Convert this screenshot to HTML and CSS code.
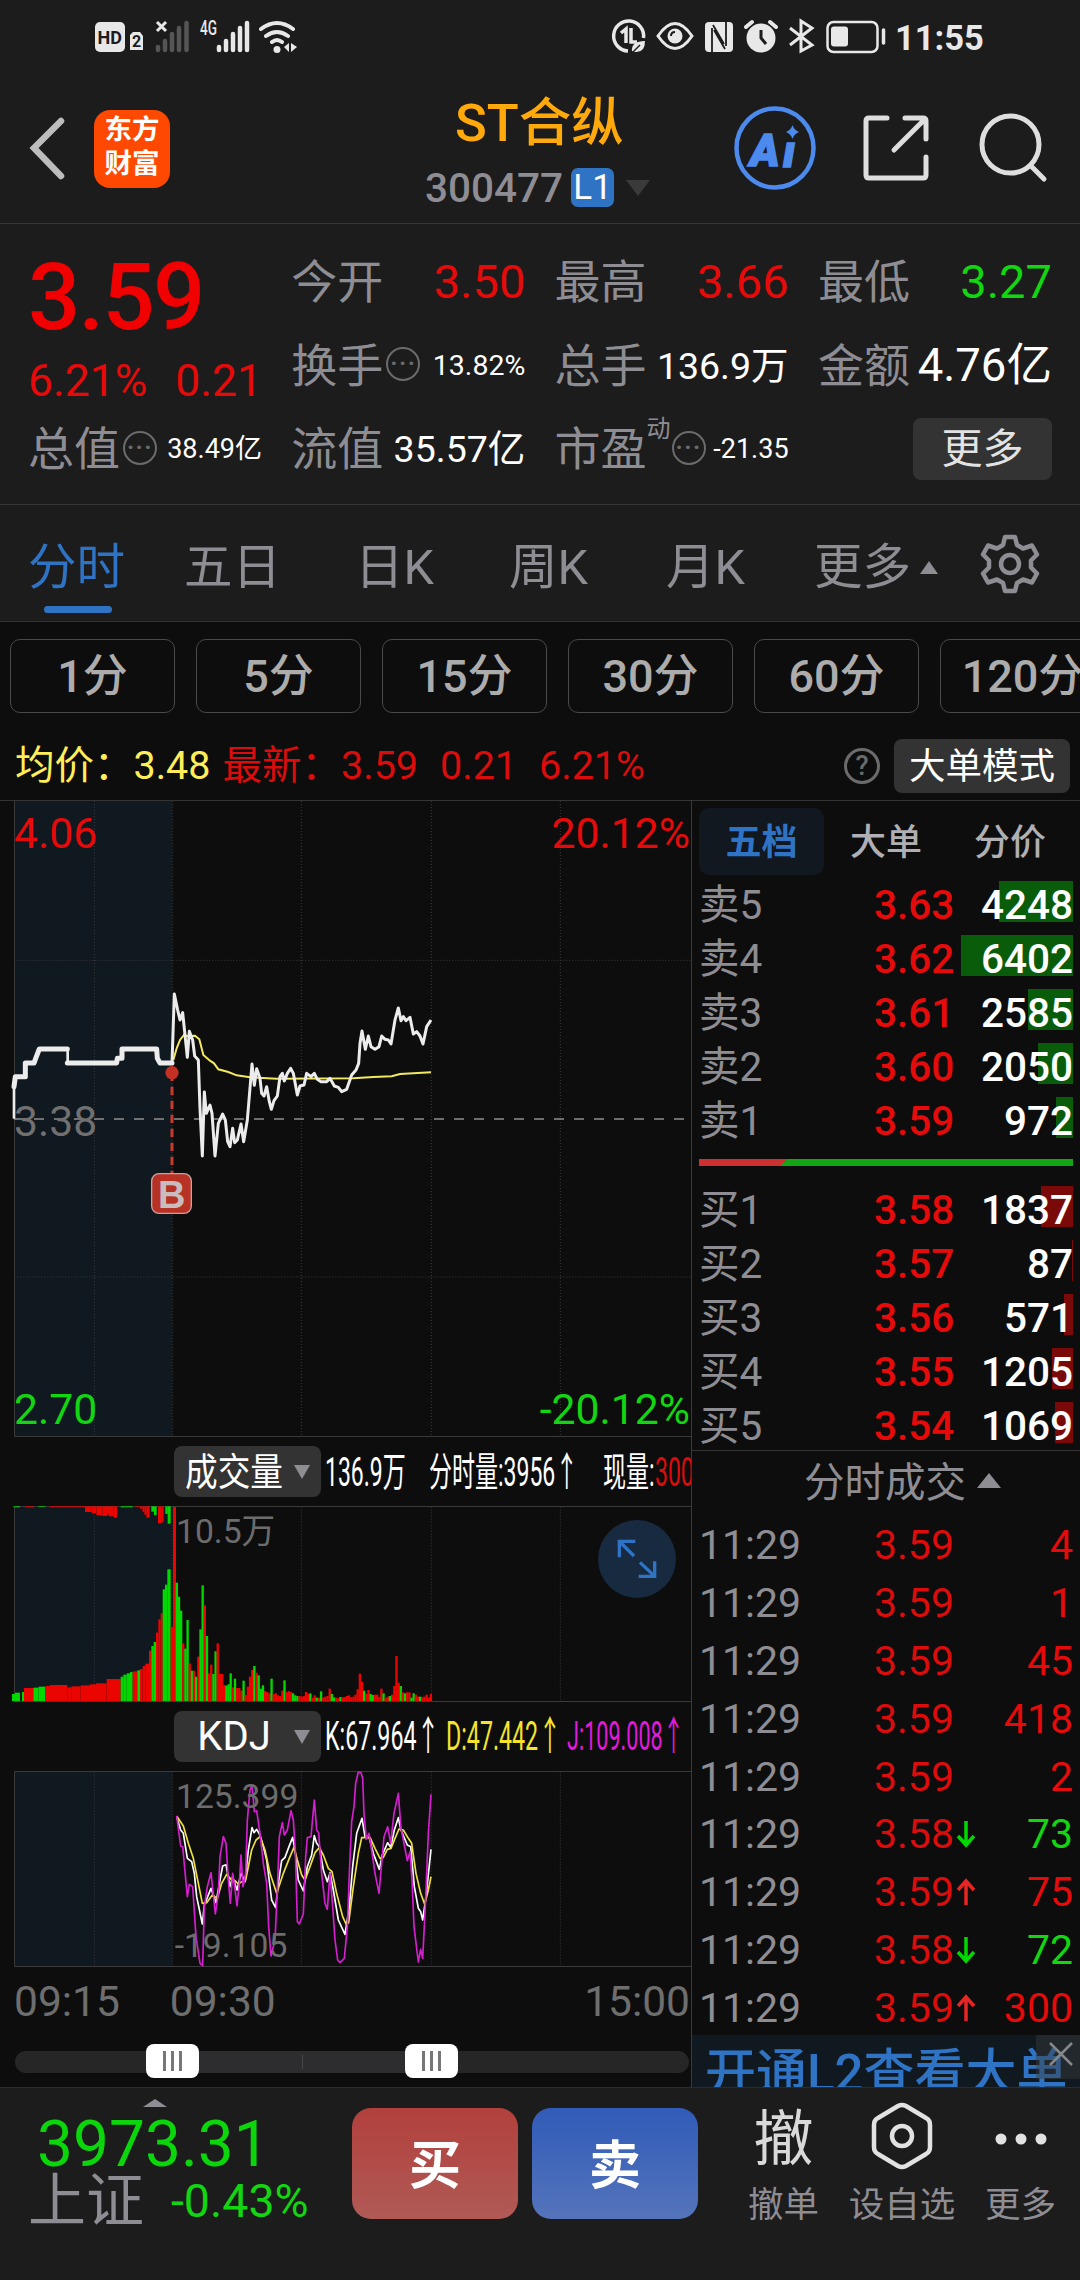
FILE: index.html
```html
<!DOCTYPE html>
<html lang="zh-CN">
<head>
    <meta charset="UTF-8">
    <meta name="viewport" content="width=device-width, initial-scale=1.0">
    <title>ST合纵 300477</title>
    <link rel="stylesheet" href="styles.css">
</head>
<body>
    <!-- Status Bar -->
    <div class="status-bar">
        <svg class="status-left" viewBox="90 16 215 42" width="215" height="42">
            <rect x="95" y="22" width="30" height="30" rx="5" fill="#e8e8e8"/>
            <text x="97.500" y="44" class="hd-text">HD</text>
            <path d="M133 32h7l3 4v14h-13V35z" fill="#e8e8e8"/>
            <text x="132" y="47" class="sim-text">2</text>
            <path d="M157 22l9 9M166 22l-9 9" stroke="#e8e8e8" stroke-width="3"/>
            <path d="M158 47v3M165 41v9M172 34v16M179 28v22M186.500 23v27" stroke="#555" stroke-width="4.500" stroke-linecap="round"/>
            <text x="200" y="35" class="net-text" textLength="17" lengthAdjust="spacingAndGlyphs">4G</text>
            <path d="M219 47v3M226 41v9M233 34v16M240 28v22M247 23v27" stroke="#e8e8e8" stroke-width="4.500" stroke-linecap="round"/>
            <path d="M261 29q16-12 32 0M266 36q11-8 22 0M272 42q5-4 10 0" fill="none" stroke="#e8e8e8" stroke-width="4" stroke-linecap="round"/>
            <circle cx="277" cy="49.500" r="3.500" fill="#e8e8e8"/>
            <path d="M289 43v9l-5-5zM291 43v9l6-5z" fill="#e8e8e8"/>
        </svg>
        <svg class="status-right" viewBox="610 16 278 42" width="278" height="42">
            <path d="M643.500 38A15 15 0 1 0 628 51" fill="none" stroke="#e8e8e8" stroke-width="3.500"/>
            <path d="M621 33l5-4v14M631 28v14h6" fill="none" stroke="#e8e8e8" stroke-width="3.500"/>
            <path d="M632 51q-1-10 13-10q0 12-10 11z" fill="#e8e8e8"/>
            <path d="M633 52l7-7" stroke="#1c1c1c" stroke-width="1.500"/>
            <path d="M658 36q17-25 34 0q-17 25-34 0z" fill="none" stroke="#e8e8e8" stroke-width="3"/>
            <circle cx="675" cy="36" r="7.500" fill="#e8e8e8"/>
            <path d="M671 36q0-4 4-4" stroke="#1c1c1c" stroke-width="2" fill="none"/>
            <rect x="705" y="22" width="28" height="30" rx="4" fill="#e8e8e8"/>
            <path d="M712 28v25M714 30l11 19M726 46V21M724 44L713 25" stroke="#1c1c1c" stroke-width="1.800"/>
            <circle cx="761" cy="38" r="14.500" fill="#e8e8e8"/>
            <path d="M746 27l6-5M776 27l-6-5" stroke="#e8e8e8" stroke-width="4" stroke-linecap="round"/>
            <path d="M761 30v8l5 6" fill="none" stroke="#1c1c1c" stroke-width="3"/>
            <path d="M790 28l22 17l-11 6V21l11 7l-22 17" fill="none" stroke="#e8e8e8" stroke-width="3"/>
            <rect x="827.500" y="22" width="50" height="30" rx="6" fill="none" stroke="#e8e8e8" stroke-width="2.500"/>
            <rect x="831" y="26.500" width="17" height="20" rx="3" fill="#e8e8e8"/>
            <path d="M883.500 30v13" stroke="#e8e8e8" stroke-width="3.500" stroke-linecap="round"/>
        </svg>
        <span class="clock">11:55</span>
    </div>

    <!-- Header -->
    <div class="header">
        <svg class="back-icon" viewBox="0 0 40 64" width="40" height="64">
            <path d="M34 5L7 32l27 28" fill="none" stroke="#bdbdbd" stroke-width="6.500" stroke-linecap="round"/>
        </svg>
        <div class="app-logo">东方<br>财富</div>
        <div class="stock">
            <div class="stock-name">ST合纵</div>
            <div class="stock-code">
                <span>300477</span><span class="level">L1</span><i class="tri-down"></i>
            </div>
        </div>
        <svg class="header-icons" viewBox="730 100 330 96" width="330" height="96">
            <ellipse cx="775" cy="148" rx="38.500" ry="39.500" fill="none" stroke="#4c8aee" stroke-width="4.500"/>
            <text x="750" y="166" class="ai-text">A</text>
            <text x="783" y="167" class="ai-text ai-i">ı</text>
            <path d="M792.500 125q1.500 5 6.500 7q-5 2-6.500 7q-1.500-5-6.500-7q5-2 6.500-7z" fill="#4c8aee"/>
            <path d="M887 118h-18q-3 0-3 3v54q0 3 3 3h54q3 0 3-3v-18M905 118h18q3 0 3 3v18M924 120l-30 30" fill="none" stroke="#dedede" stroke-width="5" stroke-linecap="round"/>
            <circle cx="1010.500" cy="144.500" r="28.500" fill="none" stroke="#dedede" stroke-width="5"/>
            <path d="M1031 166l13 13" stroke="#dedede" stroke-width="5" stroke-linecap="round"/>
        </svg>
    </div>

    <!-- Quote -->
    <div class="quote">
        <div class="price-box">
            <div class="price">3.59</div>
            <div class="change"><span>6.21%</span><span>0.21</span></div>
        </div>
        <div class="cell"><span class="label">今开</span><span class="value red v47">3.50</span></div>
        <div class="cell"><span class="label">最高</span><span class="value red v47">3.66</span></div>
        <div class="cell"><span class="label">最低</span><span class="value green v47">3.27</span></div>
        <div class="cell"><span class="label">换手</span><i class="dots">···</i><span class="value v28">13.82%</span></div>
        <div class="cell"><span class="label">总手</span><span class="value v37">136.9万</span></div>
        <div class="cell"><span class="label">金额</span><span class="value v45">4.76亿</span></div>
        <div class="cell"><span class="label">总值</span><i class="dots">···</i><span class="value v27">38.49亿</span></div>
        <div class="cell"><span class="label">流值</span><span class="value v37">35.57亿</span></div>
        <div class="cell"><span class="label">市盈</span><span class="sup">动</span><i class="dots">···</i><span class="value v27">-21.35</span></div>
        <div class="cell"><span class="more-btn">更多</span></div>
    </div>

    <!-- Tabs -->
    <div class="tabs">
        <span class="tab active">分时</span>
        <span class="tab">五日</span>
        <span class="tab">日K</span>
        <span class="tab">周K</span>
        <span class="tab">月K</span>
        <span class="tab">更多<i class="tri-up"></i></span>
        <svg class="gear" viewBox="0 0 60 60" width="60" height="60">
            <path d="M25 3h10l2 8 6 3.500 9-3 5 9-6 6v7l6 6-5 9-9-3-6 3.500-2 8H25l-2-8-6-3.500-9 3-5-9 6-6v-7l-6-6 5-9 9 3 6-3.500z" fill="none" stroke="#8e8d93" stroke-width="4.500" stroke-linejoin="round"/>
            <circle cx="30" cy="30" r="9" fill="none" stroke="#8e8d93" stroke-width="4.500"/>
        </svg>
    </div>

    <div class="periods">
        <span>1分</span><span>5分</span><span>15分</span><span>30分</span><span>60分</span><span>120分</span>
    </div>

    <div class="info">
        <span class="avg">均价：3.48</span>
        <span class="last">最新：3.59</span>
        <span class="last">0.21</span>
        <span class="last">6.21%</span>
        <i class="help">?</i>
        <span class="mode-btn">大单模式</span>
    </div>

    <div class="main">
        <!-- Charts Section -->
        <div class="charts">
            <svg class="price-chart" viewBox="0 63 2073 1908" width="691" height="636">
                <rect x="43" y="63" width="474" height="1905" fill="#101820"/>
                <path class="grid-line" d="M283 63v1905M517 63v1905M904 63v1905M1294 63v1905M1681 63v1905M43 541h2030M43 1491h2030"/>
                <path class="axis" d="M43.500 63v1906.500h2030"/>
                <path d="M42 1017h2031" stroke="#8f8f8f" stroke-width="5" stroke-dasharray="30 30"/>
                <text x="42" y="205" class="axis-text red-fill">4.06</text>
                <text x="2070" y="205" class="axis-text red-fill end">20.12%</text>
                <text x="42" y="1068" class="axis-text">3.38</text>
                <text x="42" y="1932" class="axis-text green-fill">2.70</text>
                <text x="2070" y="1932" class="axis-text green-fill end">-20.12%</text>
                <polyline fill="none" stroke="#f2e95f" stroke-width="6" points="520,840 530,805 540,780 552,765 560,768 585,767 598,778 610,825 630,842 642,850 655,868 685,876 710,886 750,892 830,896 1060,895 1120,891 1175,889 1200,882 1240,880 1293,877"/>
                <path d="M42 1016V920" stroke="#ececec" stroke-width="8"/>
                <polyline fill="none" stroke="#ececec" stroke-width="15" stroke-linejoin="round" stroke-linecap="round" points="42,920 46,890 76,890 76,849 102,849 108,833 118,807 202,807"/>
                <path d="M203 807v42" stroke="#ececec" stroke-width="8"/>
                <polyline fill="none" stroke="#ececec" stroke-width="15" stroke-linejoin="round" stroke-linecap="round" points="202,849 350,849 352,835 366,835 366,807 470,807 472,835 480,849 516,849"/>
                <polyline fill="none" stroke="#ececec" stroke-width="9" stroke-linejoin="round" points="516,849 523,642 533,690 540,720 548,698 562,832 568,754 578,780 584,828 595,840 600,985 607,1128 613,936 619,1000 630,975 636,1000 645,1128 655,1030 668,1002 676,1020 683,1085 690,1100 698,1045 704,1088 712,1080 723,1032 731,1085 742,1020 756,852 763,916 770,866 780,895 785,940 792,948 800,920 808,965 814,988 822,962 832,948 840,890 847,880 853,903 862,880 872,865 880,880 892,945 900,918 912,915 920,880 933,890 943,880 952,898 963,905 980,905 990,895 1003,918 1015,922 1025,935 1040,928 1055,885 1068,870 1076,850 1080,790 1086,753 1096,808 1105,768 1113,800 1125,808 1137,800 1145,768 1155,778 1165,780 1173,792 1185,720 1195,684 1203,722 1210,710 1218,722 1230,712 1240,762 1250,755 1260,768 1269,792 1280,740 1293,720"/>
                <!-- Buy marker -->
                <path d="M516 878v302" stroke="#c83a2e" stroke-width="9" stroke-dasharray="25 17"/>
                <circle cx="516" cy="878" r="20" fill="#c23124"/>
                <rect x="455" y="1181" width="119" height="119" rx="22" fill="#b83125" stroke="#c9a09d" stroke-width="4"/>
                <text x="515" y="1283" class="marker-text">B</text>
            </svg>

            <div class="indicator">
                <span class="select"><span class="select-volume">成交量</span><i class="tri-select"></i></span>
                <div class="readout">
                    <span class="r1">136.9万</span>
                    <span class="r2">分时量:3956↑</span>
                    <span class="r3">现量:</span>
                    <span class="r4">300</span>
                </div>
            </div>

            <svg class="sub-chart" viewBox="0 258 2073 588" width="691" height="196">
                <rect x="43" y="260" width="474" height="584" fill="#101820"/>
                <path class="grid-line" d="M283 260v584M517 260v584M904 260v584M1294 260v584M1681 260v584"/>
                <path class="axis" d="M2073 259.500H43.500v585H2073"/>
                <g id="volume"></g>
                <text x="528" y="370" class="scale-text">10.5万</text>
                <circle cx="1911" cy="417" r="117" fill="#182a40"/>
                <path d="M1858 412v-48h48M1860 366l42 42M1964 424v45h-48M1962 467l-42-40" fill="none" stroke="#2f74c4" stroke-width="10"/>
            </svg>

            <div class="indicator second">
                <span class="select"><span class="select-kdj">KDJ</span><i class="tri-select"></i></span>
                <div class="readout">
                    <span class="k">K:67.964↑</span>
                    <span class="d">D:47.442↑</span>
                    <span class="j">J:109.008↑</span>
                </div>
            </div>

            <svg class="sub-chart" viewBox="0 93 2073 588" width="691" height="196">
                <rect x="43" y="95" width="474" height="584" fill="#101820"/>
                <path class="grid-line" d="M283 95v584M517 95v584M904 95v584M1294 95v584M1681 95v584"/>
                <path class="axis" d="M2073 94.500H43.500v585H2073"/>
                <polyline class="kdj" stroke="#fff" points="530,230 542,270 550,280 562,355 575,365 583,400 590,470 607,552 613,495 633,445 648,488 660,420 668,378 678,374 690,440 698,410 711,450 723,400 735,425 745,330 756,263 762,278 770,268 780,285 790,320 800,360 815,480 827,503 835,430 845,362 855,352 867,320 878,292 885,330 895,420 910,453 922,380 935,345 943,287 950,310 958,320 970,390 982,425 990,398 1000,450 1015,540 1035,583 1048,500 1058,380 1070,280 1086,235 1095,290 1107,290 1120,340 1138,388 1147,345 1163,308 1172,322 1183,270 1195,233 1203,270 1222,315 1232,320 1243,440 1255,505 1262,515 1268,540 1278,470 1293,328"/>
                <polyline class="kdj" stroke="#efe23c" points="530,228 550,258 565,310 580,355 595,430 607,490 620,488 637,465 652,475 665,430 680,403 693,418 705,422 715,432 725,425 737,420 755,330 768,300 780,290 795,330 810,400 830,460 850,400 870,350 882,322 892,360 905,405 915,420 930,380 945,338 958,323 970,345 985,385 996,395 1010,460 1028,530 1038,552 1046,548 1060,440 1075,340 1085,293 1110,292 1125,325 1140,355 1150,352 1162,328 1173,325 1185,295 1197,267 1210,270 1225,295 1235,310 1248,400 1262,460 1274,493 1285,450 1293,410"/>
                <polyline class="kdj" stroke="#d41fd0" points="530,228 542,318 548,320 562,470 568,433 578,440 588,590 600,670 608,677 613,500 622,440 633,398 646,522 655,460 660,350 670,290 678,310 685,420 691,490 698,400 704,440 711,498 718,430 723,345 729,440 737,400 742,240 750,150 756,135 763,215 770,212 780,280 790,370 800,430 806,560 813,648 825,600 832,450 838,290 847,248 853,285 862,270 873,212 880,240 886,330 892,545 898,552 910,522 917,350 922,293 933,290 943,180 950,270 956,278 965,400 975,490 982,508 990,400 998,500 1005,600 1013,660 1020,668 1033,655 1042,560 1048,400 1055,245 1062,200 1067,130 1075,96 1083,98 1088,115 1092,220 1099,298 1107,280 1115,330 1125,400 1137,460 1145,370 1152,290 1163,260 1172,310 1182,220 1195,160 1203,265 1210,300 1222,362 1230,335 1236,420 1242,560 1255,666 1262,628 1268,655 1276,500 1285,280 1293,163"/>
                <text x="528" y="204" class="scale-text">125.399</text>
                <text x="524" y="652" class="scale-text">-19.105</text>
            </svg>

            <div class="times"><span>09:15</span><span>09:30</span><span>15:00</span></div>

            <div class="slider">
                <div class="track"></div>
                <i class="handle"></i>
                <div class="track range"></div>
                <i class="handle"></i>
                <div class="track rest"></div>
            </div>
        </div>

        <!-- Order Book Section -->
        <div class="side">
            <div class="side-tabs"><span class="on">五档</span><span>大单</span><span>分价</span></div>
            <div class="book sell">
                <div class="level-row"><span>卖5</span><b>3.63</b><em><i style="width: 74px"></i>4248</em></div>
                <div class="level-row"><span>卖4</span><b>3.62</b><em><i style="width: 112px"></i>6402</em></div>
                <div class="level-row"><span>卖3</span><b>3.61</b><em><i style="width: 45px"></i>2585</em></div>
                <div class="level-row"><span>卖2</span><b>3.60</b><em><i style="width: 35px"></i>2050</em></div>
                <div class="level-row"><span>卖1</span><b>3.59</b><em><i style="width: 17px"></i>972</em></div>
            </div>
            <div class="ratio"></div>
            <div class="book buy">
                <div class="level-row"><span>买1</span><b>3.58</b><em><i style="width: 32px"></i>1837</em></div>
                <div class="level-row"><span>买2</span><b>3.57</b><em><i style="width: 1px"></i>87</em></div>
                <div class="level-row"><span>买3</span><b>3.56</b><em><i style="width: 9px"></i>571</em></div>
                <div class="level-row"><span>买4</span><b>3.55</b><em><i style="width: 21px"></i>1205</em></div>
                <div class="level-row"><span>买5</span><b>3.54</b><em><i style="width: 18px"></i>1069</em></div>
            </div>
            <div class="deals-title">分时成交<i class="tri-up big"></i></div>
            <div class="deals">
                <div class="deal"><span>11:29</span><b>3.59</b><em>4</em></div>
                <div class="deal"><span>11:29</span><b>3.59</b><em>1</em></div>
                <div class="deal"><span>11:29</span><b>3.59</b><em>45</em></div>
                <div class="deal"><span>11:29</span><b>3.59</b><em>418</em></div>
                <div class="deal"><span>11:29</span><b>3.59</b><em>2</em></div>
                <div class="deal down"><span>11:29</span><b>3.58</b><svg width="20" height="28" viewBox="0 0 20 28"><path d="M10 1v24M2 16l8 9 8-9"/></svg><em>73</em></div>
                <div class="deal up"><span>11:29</span><b>3.59</b><svg width="20" height="28" viewBox="0 0 20 28"><path d="M10 27V3M2 12l8-9 8 9"/></svg><em>75</em></div>
                <div class="deal down"><span>11:29</span><b>3.58</b><svg width="20" height="28" viewBox="0 0 20 28"><path d="M10 1v24M2 16l8 9 8-9"/></svg><em>72</em></div>
                <div class="deal up"><span>11:29</span><b>3.59</b><svg width="20" height="28" viewBox="0 0 20 28"><path d="M10 27V3M2 12l8-9 8 9"/></svg><em>300</em></div>
            </div>
            <div class="l2-banner">
                开通L2查看大单
                <span class="close"><svg width="26" height="26" viewBox="0 0 26 26"><path d="M2 2l22 22M24 2L2 24" stroke="#85888b" stroke-width="2.500"/></svg></span>
            </div>
        </div>
    </div>

    <!-- Bottom Bar -->
    <div class="bottom-bar">
        <div class="index">
            <i class="tri-up index-tri"></i>
            <div class="index-value">3973.31</div>
            <div class="index-row"><span class="index-name">上证</span><span class="index-change">-0.43%</span></div>
        </div>
        <div class="trade buy-btn">买</div>
        <div class="trade sell-btn">卖</div>
        <div class="action a1"><span class="big-char">撤</span><span>撤单</span></div>
        <div class="action a2">
            <svg width="64" height="70" viewBox="870 2101 64 70">
                <path d="M898 2106q4-2 8 0l20 12q4 2 4 7v22q0 5-4 7l-20 12q-4 2-8 0l-20-12q-4-2-4-7v-22q0-5 4-7z" fill="none" stroke="#e2e2e2" stroke-width="4.500"/>
                <circle cx="902" cy="2136" r="10" fill="none" stroke="#e2e2e2" stroke-width="4.500"/>
            </svg>
            <span>设自选</span>
        </div>
        <div class="action a3">
            <svg width="64" height="70" viewBox="989 2101 64 70" fill="#e2e2e2">
                <circle cx="1001" cy="2139" r="5.500"/><circle cx="1021" cy="2139" r="5.500"/><circle cx="1041" cy="2139" r="5.500"/>
            </svg>
            <span>更多</span>
        </div>
    </div>
    <script src="chart.js"></script>
</body>
</html>
```
FILE: chart.js
```js
const RED = '#ea0500';
const GREEN = '#00d800';
const TOP = 259;
const BASE = 843;
const group = document.getElementById('volume');

function addBar(x, y, width, height, color) {
    const bar = document.createElementNS('http://www.w3.org/2000/svg', 'rect');
    bar.setAttribute('x', x);
    bar.setAttribute('y', y);
    bar.setAttribute('width', width);
    bar.setAttribute('height', height);
    bar.setAttribute('fill', color);
    group.appendChild(bar);
}

// Call auction, drawn from the bottom: x, top, width, side
const auction = [
    [36, 822, 9, 'g'], [45, 818, 15, 'g'], [66, 816, 6, 'g'], [72, 804, 28, 'r'], [100, 803, 16, 'g'], [116, 800, 20, 'g'],
    [136, 798, 14, 'r'], [150, 795, 52, 'r'], [202, 802, 12, 'r'], [214, 799, 28, 'r'], [242, 796, 28, 'r'],
    [270, 793, 18, 'r'], [288, 790, 32, 'r'], [320, 777, 42, 'r'], [362, 770, 8, 'g'], [370, 764, 10, 'g'],
    [380, 760, 10, 'g'], [390, 756, 8, 'g'], [398, 754, 14, 'r'], [412, 751, 8, 'g'], [420, 747, 8, 'r'],
    [428, 738, 8, 'r'], [436, 731, 11, 'r'], [447, 692, 7, 'r'], [454, 678, 7, 'g'], [461, 666, 7, 'g'],
    [468, 638, 7, 'r'], [475, 598, 7, 'r'], [482, 580, 6, 'r'], [488, 508, 7, 'g'], [495, 494, 7, 'g'],
    [502, 448, 10, 'g'], [512, 620, 8, 'r'], [519, 261, 9, 'r']
];

// Unmatched orders, hanging from the top: x, bottom, width, side
const unmatched = [
    [40, 262, 20, 'g'], [75, 262, 27, 'r'], [115, 261, 20, 'g'], [150, 262, 105, 'r'], [255, 276, 20, 'r'],
    [275, 280, 14, 'r'], [289, 286, 18, 'r'], [307, 288, 14, 'r'], [321, 284, 6, 'r'], [327, 289, 14, 'r'],
    [341, 293, 10, 'r'], [362, 262, 36, 'g'], [405, 261, 15, 'r'], [420, 266, 7, 'r'], [427, 275, 6, 'r'],
    [433, 284, 6, 'r'], [439, 293, 10, 'r'], [454, 275, 8, 'g'], [462, 285, 8, 'g'], [474, 310, 10, 'r'],
    [484, 307, 7, 'r'], [496, 282, 7, 'g'], [503, 311, 9, 'g']
];

// One bar per minute from 09:31: top, side
const minutes = [
    [488, 'g'], [530, 'g'], [572, 'g'], [670, 'r'], [686, 'g'], [600, 'g'], [730, 'r'], [752, 'g'], [752, 'r'], [770, 'g'],
    [710, 'r'], [628, 'g'], [496, 'g'], [556, 'r'], [648, 'g'], [760, 'r'], [734, 'r'], [762, 'g'], [694, 'g'], [670, 'r'],
    [762, 'r'], [762, 'r'], [795, 'r'], [797, 'g'], [793, 'g'], [760, 'g'], [802, 'r'], [776, 'g'], [804, 'r'], [804, 'r'],
    [812, 'r'], [782, 'g'], [825, 'r'], [800, 'r'], [770, 'r'], [750, 'r'], [738, 'g'], [758, 'r'], [766, 'g'], [806, 'g'],
    [796, 'g'], [813, 'r'], [816, 'r'], [820, 'r'], [776, 'g'], [822, 'r'], [820, 'r'], [826, 'r'], [828, 'r'], [812, 'r'],
    [781, 'g'], [816, 'r'], [813, 'r'], [816, 'r'], [820, 'g'], [826, 'g'], [828, 'g'], [828, 'r'], [830, 'r'], [828, 'r'],
    [816, 'r'], [822, 'r'], [820, 'g'], [833, 'r'], [826, 'r'], [833, 'g'], [833, 'r'], [814, 'g'], [832, 'r'], [830, 'r'],
    [828, 'r'], [806, 'r'], [822, 'g'], [832, 'g'], [833, 'r'], [835, 'r'], [831, 'g'], [832, 'r'], [831, 'r'], [828, 'r'],
    [826, 'r'], [832, 'r'], [830, 'r'], [824, 'r'], [808, 'r'], [761, 'r'], [786, 'r'], [812, 'g'], [822, 'r'], [810, 'r'],
    [822, 'g'], [825, 'g'], [824, 'r'], [824, 'r'], [831, 'r'], [806, 'r'], [820, 'g'], [833, 'r'], [830, 'r'], [828, 'g'],
    [824, 'r'], [798, 'r'], [708, 'r'], [788, 'r'], [798, 'g'], [817, 'r'], [820, 'g'], [817, 'r'], [817, 'r'], [833, 'g'],
    [820, 'g'], [824, 'r'], [830, 'r'], [830, 'g'], [831, 'r'], [830, 'r'], [824, 'r'], [832, 'r'], [822, 'r']
];

auction.forEach(([x, y, w, side]) => addBar(x, y, w, BASE - y, side === 'r' ? RED : GREEN));
unmatched.forEach(([x, y, w, side]) => addBar(x, TOP, w, y - TOP, side === 'r' ? RED : GREEN));
minutes.forEach(([y, side], i) => addBar(527 + i * 6.46, y, 7, BASE - y, side === 'r' ? RED : GREEN));
```
FILE: styles.css
```css
* {
    box-sizing: border-box;
}

body {
    margin: 0;
    width: 1080px;
    height: 2280px;
    overflow: hidden;
    background-color: #0d0d0d;
    color: #8e8d93;
    font-family: Roboto, "Noto Sans CJK SC", sans-serif;
    display: flex;
    flex-direction: column;
}

i, em, b {
    font-style: normal;
    font-weight: normal;
}

svg {
    display: block;
    flex: none;
}

.red { color: #e60a0a; }
.green { color: #12d612; }

/* Status bar */
.status-bar {
    display: flex;
    height: 74px;
    padding: 16px 0 0 90px;
    background-color: #1c1c1c;
}

.status-right {
    margin-left: 305px;
}

.hd-text { font-size: 18px; font-weight: 700; fill: #1c1c1c; }
.sim-text { font-size: 16px; font-weight: 700; fill: #1c1c1c; }
.net-text { font-size: 20px; font-weight: 500; fill: #e8e8e8; }

.clock {
    margin-left: 7px;
    color: #e8e8e8;
    font-size: 34.500px;
    font-weight: 700;
    line-height: 44px;
}

/* Header */
.header {
    display: flex;
    height: 150px;
    background-color: #1c1c1c;
    border-bottom: 1px solid #343434;
}

.back-icon {
    margin: 42px 0 0 27px;
}

.app-logo {
    width: 76px;
    height: 78px;
    margin: 36px 0 0 27px;
    padding-top: 3px;
    border-radius: 16px;
    background-color: #ff4800;
    color: #fff;
    font-size: 27.500px;
    font-weight: 700;
    line-height: 34px;
    text-align: center;
}

.stock {
    width: 560px;
    padding-top: 18px;
}

.stock-name {
    padding-left: 285px;
    color: #ffa90a;
    font-size: 52.500px;
    font-weight: 500;
    line-height: 63px;
}

.stock-code {
    display: flex;
    align-items: center;
    height: 68px;
    padding: 0 0 2px 255px;
    font-size: 40.500px;
    font-weight: 500;
}

.level {
    width: 43px;
    height: 39px;
    margin-left: 8px;
    border-radius: 7px;
    background-color: #2f74c4;
    color: #fff;
    font-size: 35px;
    font-weight: 400;
    line-height: 39px;
    text-align: center;
}

.tri-down {
    margin-left: 12px;
    border: 12px solid transparent;
    border-top: 16px solid #3a3a3a;
    border-bottom: 0;
}

.header-icons {
    margin-top: 26px;
}

.ai-text {
    font-size: 45px;
    font-weight: 900;
    font-style: italic;
    fill: #4c8aee;
    stroke: #4c8aee;
    stroke-width: 1.500px;
}

.ai-i {
    font-size: 44px;
}

/* Quote */
.quote {
    display: grid;
    grid-template-columns: repeat(4, 234px);
    grid-template-rows: 84px 84px 83px;
    column-gap: 29.300px;
    height: 281px;
    padding: 16px 0 0 28px;
    background-color: #1c1c1c;
    border-bottom: 1px solid #343434;
}

.price-box {
    grid-row: 1 / 3;
}

.price {
    height: 112px;
    color: #f00000;
    font-size: 92px;
    font-weight: 500;
    letter-spacing: -1.700px;
    line-height: 115px;
}

.change {
    display: flex;
    justify-content: space-between;
    width: 234px;
    color: #e60a0a;
    font-size: 44.500px;
    line-height: 58px;
}

.cell {
    position: relative;
    display: flex;
    align-items: center;
}

.label {
    font-size: 46px;
    line-height: 60px;
}

.value {
    margin-left: auto;
    color: #fff;
    line-height: 56px;
}

.value.red { color: #e60a0a; }
.value.green { color: #12d612; }

.v47 { font-size: 47px; }
.v45 { font-size: 45.500px; }
.v37 { font-size: 37.500px; }
.v28 { font-size: 28.500px; }
.v27 { font-size: 27px; }

.dots {
    width: 34px;
    height: 34px;
    margin: -3px 0 0 3px;
    border: 2.500px solid #6b6b6b;
    border-radius: 50%;
    color: #6b6b6b;
    font-size: 24px;
    font-weight: 700;
    letter-spacing: 1.500px;
    line-height: 29px;
    text-align: center;
}

.sup {
    margin-top: -40px;
    font-size: 24px;
    line-height: 24px;
}

.sup + .dots {
    margin-left: 1px;
}

.more-btn {
    width: 139px;
    height: 62px;
    margin-left: auto;
    border-radius: 8px;
    background-color: #333;
    color: #e3e3e3;
    font-size: 41px;
    line-height: 62px;
    text-align: center;
}

/* Tabs */
.tabs {
    display: grid;
    grid-template-columns: 156px 171px 154px 157px 148px 166px 60px;
    align-items: start;
    height: 118px;
    padding: 29px 0 0 28px;
    background-color: #1c1c1c;
    border-bottom: 1px solid #343434;
    font-size: 48.500px;
    line-height: 68px;
}

.tab {
    display: flex;
    align-items: center;
}

.tab.active {
    position: relative;
    color: #2f74c4;
}

.tab.active::after {
    content: "";
    position: absolute;
    left: 16px;
    top: 72px;
    width: 68px;
    height: 7px;
    border-radius: 4px;
    background-color: #2f74c4;
}

.tri-up {
    margin-left: 9px;
    border: 9px solid transparent;
    border-bottom: 13px solid #8e8d93;
    border-top: 0;
}

.periods {
    display: flex;
    gap: 21px;
    height: 109px;
    padding: 17px 0 0 10px;
}

.periods span {
    flex: none;
    width: 165px;
    height: 74px;
    border: 1.500px solid #4a4a4a;
    border-radius: 10px;
    color: #adacac;
    font-size: 45px;
    font-weight: 500;
    line-height: 73px;
    text-align: center;
}

.info {
    display: flex;
    align-items: center;
    height: 69px;
    padding: 0 10px 0 15px;
    font-size: 39.500px;
    line-height: 50px;
}

.avg { color: #ffee58; }
.last { margin-left: 22px; color: #dc0c0c; }
.avg + .last { margin-left: 12px; }

.help {
    width: 36px;
    height: 36px;
    margin-left: auto;
    border: 3px solid #6b6b6b;
    border-radius: 50%;
    color: #6b6b6b;
    font-size: 27px;
    font-weight: 500;
    line-height: 31px;
    text-align: center;
}

.mode-btn {
    width: 176px;
    height: 54px;
    margin-left: 14px;
    border-radius: 8px;
    background-color: #333;
    color: #fff;
    font-size: 36.500px;
    line-height: 55px;
    text-align: center;
}

/* Charts */
.main {
    display: flex;
    height: 1287px;
    border-top: 1px solid #343434;
}

.charts {
    width: 692px;
    border-right: 1px solid #3a3a3a;
}

.grid-line {
    stroke: #3c3c3c;
    stroke-width: 3;
    stroke-dasharray: 3 6;
}

.axis {
    fill: none;
    stroke: #3a3a3a;
    stroke-width: 3;
}

.axis-text {
    font-size: 128px;
    fill: #707070;
}

.red-fill { fill: #e60a0a; }
.green-fill { fill: #12d612; }
.end { text-anchor: end; }

.scale-text {
    font-size: 101px;
    fill: #6c6c6c;
}

.marker-text {
    font-family: "Liberation Sans", sans-serif;
    font-size: 114px;
    font-weight: 700;
    fill: #c9bcbc;
    text-anchor: middle;
}

.kdj {
    fill: none;
    stroke-width: 5;
    stroke-linejoin: round;
}

.indicator {
    display: flex;
    height: 69px;
    padding: 9px 0 0 174px;
}

.select {
    display: flex;
    flex: none;
    align-items: center;
    width: 147px;
    height: 51px;
    padding-left: 11px;
    border-radius: 8px;
    background-color: #333;
    color: #fff;
}

.select-volume {
    width: 99px;
    font-size: 38px;
    line-height: 50px;
    white-space: nowrap;
    transform: scaleX(0.86);
    transform-origin: left;
}

.select-kdj {
    width: 99px;
    padding-right: 1px;
    font-size: 40px;
    line-height: 50px;
    text-align: center;
}

.tri-select {
    margin-left: 10px;
    border: 8.500px solid transparent;
    border-top: 14px solid #8e8d93;
    border-bottom: 0;
}

/* Narrow figures beside the indicator name */
.readout {
    display: flex;
    width: 370px;
    padding-left: 4px;
    overflow: hidden;
    color: #fff;
    font-size: 40px;
    line-height: 53px;
}

.readout span {
    flex: none;
    white-space: nowrap;
    transform: scaleX(0.575);
    transform-origin: left;
}

.readout .r1 { width: 104px; }
.readout .r2 { width: 174px; }
.readout .r3 { width: 52px; }
.readout .r4 { color: #dc0c0c; }

.readout .k { width: 121px; transform: scaleX(0.58); }
.readout .d { width: 121px; color: #f5e42b; transform: scaleX(0.58); }
.readout .j { color: #e21ade; transform: scaleX(0.54); }

.second .readout { line-height: 51px; }

.times {
    display: flex;
    height: 70px;
    padding: 0 1px 0 14px;
    color: #6e6e6e;
    font-size: 42.500px;
    line-height: 70px;
}

.times span + span { margin-left: 50px; }
.times span:last-child { margin-left: auto; }

.slider {
    display: flex;
    align-items: center;
    height: 49px;
    padding: 0 2px 0 15px;
}

.track {
    width: 131px;
    height: 22px;
    border-radius: 11px 0 0 11px;
    background-color: #262626;
}

.range {
    width: 206px;
    border-radius: 0;
    background: linear-gradient(#47474a, #47474a) center / 1px 14px no-repeat #2d2d2f;
}

.rest {
    flex: 1;
    border-radius: 0 11px 11px 0;
}

.handle {
    width: 53px;
    height: 34px;
    margin-top: -1px;
    border-radius: 8px;
    background:
        linear-gradient(90deg, #777 3px, transparent 3px 8px, #777 8px 11px, transparent 11px 16px, #777 16px 19px) center / 19px 20px no-repeat #fff;
}

/* Order book */
.side {
    flex: 1;
    display: flex;
    flex-direction: column;
    overflow: hidden;
}

.side-tabs {
    display: flex;
    flex: none;
    height: 80px;
    padding: 7px 0 0 7px;
    color: #b0afb3;
    font-size: 36px;
    font-weight: 500;
    line-height: 71px;
}

.side-tabs span {
    width: 124px;
    height: 67px;
    text-align: center;
}

.side-tabs .on {
    width: 125px;
    border-radius: 10px;
    background-color: #111820;
    color: #2f74c4;
    font-weight: 700;
}

.book {
    flex: none;
    padding: 0 7px 0 7px;
}

.sell { height: 278px; }
.buy { height: 264px; }

.level-row {
    position: relative;
    display: flex;
    height: 54px;
    font-size: 40.500px;
    font-weight: 500;
    line-height: 49px;
}

.level-row span {
    width: 175px;
    font-weight: 400;
}

.level-row b {
    color: #e60a0a;
    font-weight: 500;
}

.level-row em {
    margin-left: auto;
    color: #fff;
    font-weight: 500;
}

.level-row i {
    position: absolute;
    right: 0;
    top: 0;
    z-index: -1;
    height: 41px;
    background-color: #095c09;
}

.buy .level-row i {
    background-color: #7a0a0a;
}

.ratio {
    flex: none;
    height: 7px;
    margin: 0 7px 20px;
    background: linear-gradient(135deg, #cc3030 62px, #14a514 63px);
}

.deals-title {
    display: flex;
    flex: none;
    align-items: center;
    height: 65px;
    padding-left: 112px;
    border-top: 1px solid #343434;
    font-size: 40.500px;
    line-height: 60px;
}

.tri-up.big {
    margin: -6px 0 0 11px;
    border-width: 0 12px 15px;
}

.deals {
    flex: none;
    height: 520px;
    padding: 1px 7px 0 7px;
}

.deal {
    display: flex;
    align-items: center;
    height: 57.860px;
    font-size: 41px;
}

.deal span { width: 175px; }
.deal b { color: #dc0c0c; }
.deal em { margin-left: auto; color: #e60a0a; }
.deal.down em { color: #12d612; }

.deal svg {
    margin-left: 2px;
    fill: none;
    stroke: #e82525;
    stroke-width: 3.500;
}

.deal.down svg { stroke: #00d800; }

.l2-banner {
    position: relative;
    flex: 1;
    padding-left: 13px;
    background-color: #101820;
    color: #2f74c4;
    font-size: 51px;
    font-weight: 500;
    line-height: 77px;
    white-space: nowrap;
}

.close {
    position: absolute;
    right: 0;
    top: 0;
    width: 44px;
    height: 44px;
    padding: 6px 0 0 12px;
    background-color: rgba(60, 60, 60, 0.45);
}

/* Bottom bar */
.bottom-bar {
    display: flex;
    height: 193px;
    border-top: 1px solid #2c2c2c;
    background-color: #1c1c1c;
}

.index {
    flex: none;
    width: 352px;
    padding: 11px 0 0 28px;
}

.index-tri {
    display: block;
    width: 0;
    margin-left: 115px;
    border-width: 0 12px 8px;
}

.index-value {
    padding-left: 9px;
    color: #0bd60b;
    font-size: 64px;
    line-height: 76px;
}

.index-row {
    display: flex;
    align-items: center;
    height: 36px;
    line-height: 36px;
}

.index-name {
    font-size: 58px;
}

.index-change {
    margin-left: 27px;
    color: #12d612;
    font-size: 46.500px;
}

.trade {
    flex: none;
    width: 166px;
    height: 111px;
    margin: 20px 14px 0 0;
    border-radius: 19px;
    color: #fff;
    font-size: 52px;
    font-weight: 700;
    line-height: 117px;
    text-align: center;
}

.buy-btn { background: linear-gradient(#b2403c, #b05a56); }
.sell-btn { background: linear-gradient(#305bb8, #5574bb); }

.action {
    display: flex;
    flex: none;
    flex-direction: column;
    align-items: center;
    height: 140px;
    padding-top: 13px;
    font-size: 35.500px;
    line-height: 68px;
}

.a1 { width: 143px; }
.a2 { width: 94px; white-space: nowrap; }
.a3 { width: 143px; }

.big-char {
    height: 70px;
    color: #d9d9d9;
    font-size: 60px;
    line-height: 78px;
}
```
